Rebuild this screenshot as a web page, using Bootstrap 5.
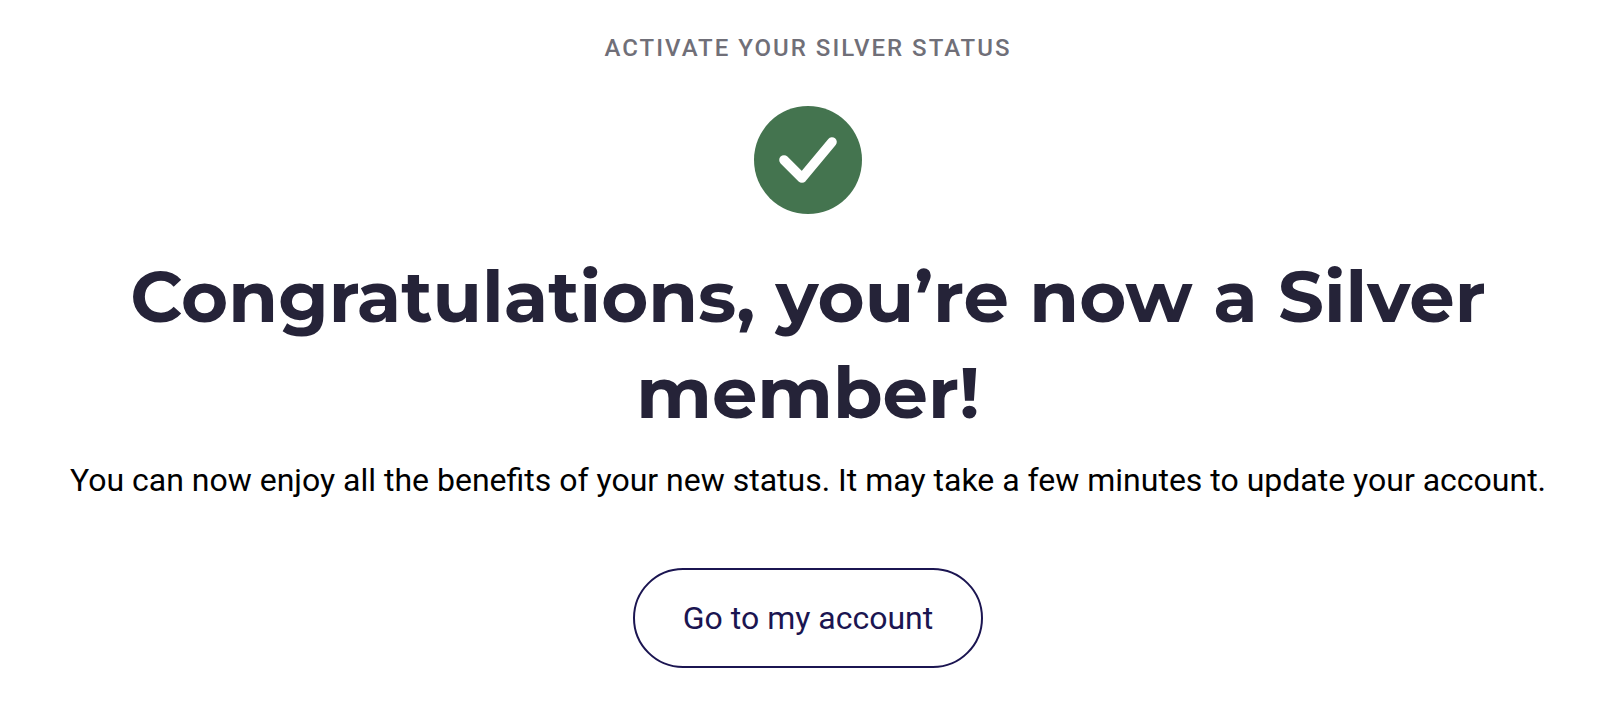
<!DOCTYPE html>
<html lang="en">
<head>
<meta charset="utf-8">
<meta name="viewport" content="width=device-width, initial-scale=1">
<title>Silver status</title>
<link href="https://cdn.jsdelivr.net/npm/bootstrap@5.3.0/dist/css/bootstrap.min.css" rel="stylesheet">
<style>
body { font-family: Roboto, sans-serif; color: #000; background: #fff; }
.eyebrow { font-size: 24px; line-height: 32px; font-weight: 500; letter-spacing: 2px; color: #706f78; margin-bottom: 42px; }
.status-icon { width: 108px; height: 108px; margin-bottom: 34px; }
.headline { font-family: Montserrat, "Open Sans", sans-serif; font-size: 72px; line-height: 96px; font-weight: 700; color: #252338; max-width: 1440px; }
.message { font-size: 32px; line-height: 48px; margin-bottom: 64px; }
.btn-account { --bs-btn-color: #1b1551; --bs-btn-border-color: #1b1551; --bs-btn-border-width: 2px; --bs-btn-font-size: 32px; --bs-btn-line-height: 48px; --bs-btn-padding-x: 48px; --bs-btn-padding-y: 24px; --bs-btn-hover-bg: #1b1551; --bs-btn-hover-color: #fff; }
</style>
</head>
<body>
<main class="container-fluid d-flex flex-column align-items-center text-center pt-4 pb-5 px-5">
  <p class="eyebrow text-uppercase mt-2">Activate your Silver status</p>
  <svg class="status-icon" viewBox="0 0 108 108" aria-hidden="true"><circle cx="54" cy="54" r="54" fill="#44744f"/><path d="M30 54 L48 72 L78 36" fill="none" stroke="#fff" stroke-width="9.6" stroke-linecap="round" stroke-linejoin="round"/></svg>
  <h1 class="headline mb-3">Congratulations, you’re now a Silver member!</h1>
  <p class="message">You can now enjoy all the benefits of your new status. It may take a few minutes to update your account.</p>
  <button type="button" class="btn btn-account rounded-pill">Go to my account</button>
</main>
<script src="https://cdn.jsdelivr.net/npm/bootstrap@5.3.0/dist/js/bootstrap.bundle.min.js"></script>
</body>
</html>
